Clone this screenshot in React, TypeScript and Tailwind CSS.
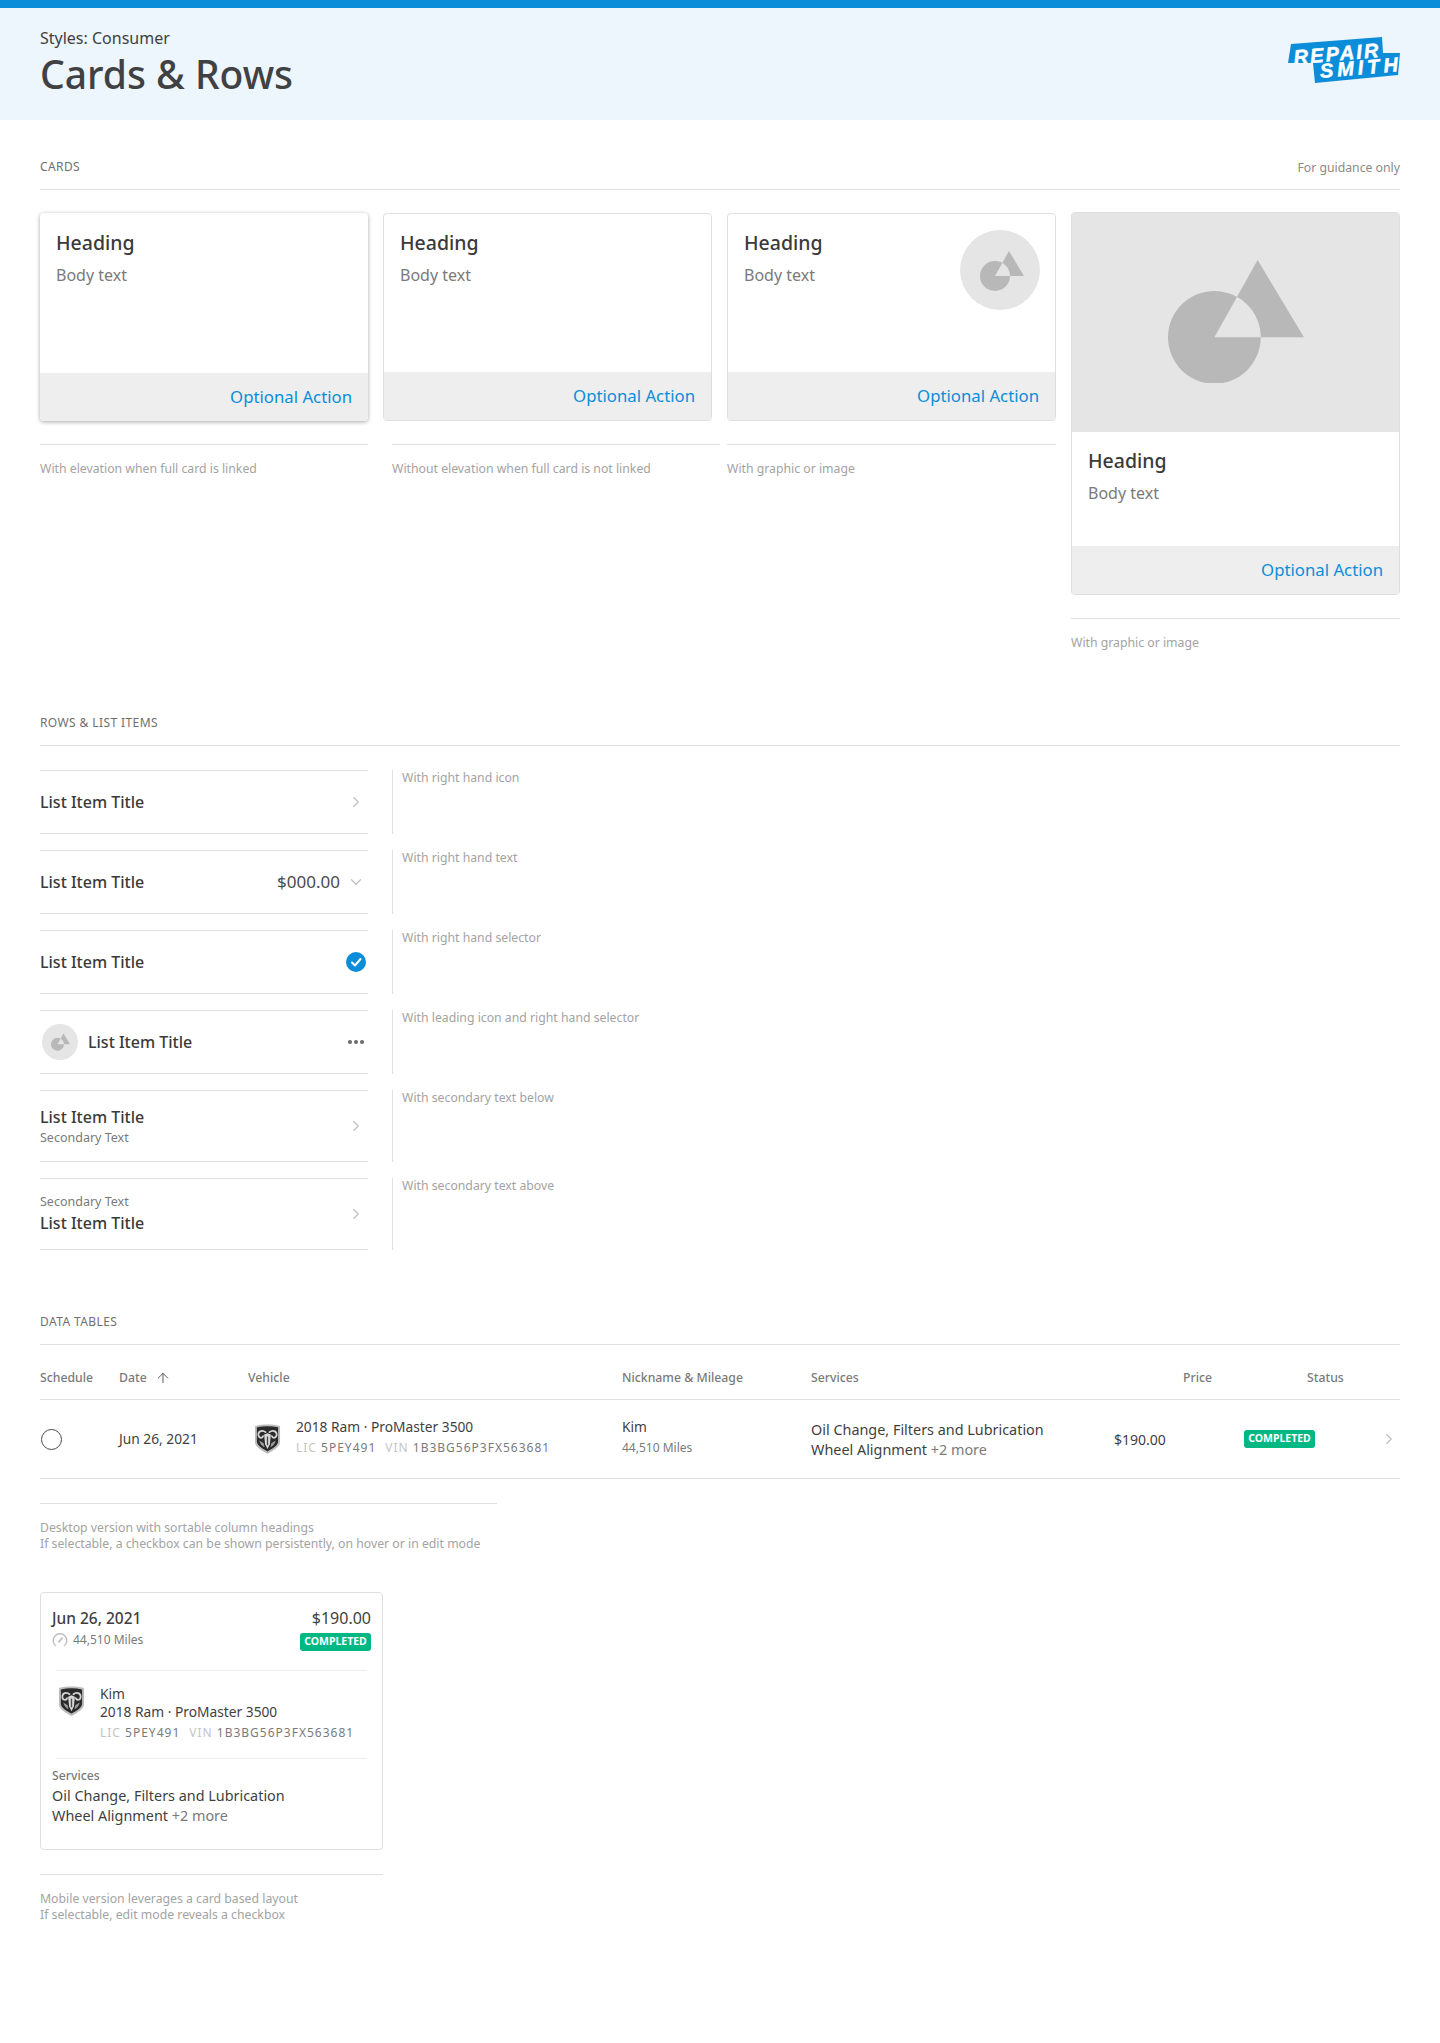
import { ArrowUp, ChevronDown, ChevronRight } from 'lucide-react';

const font = "font-['Noto_Sans',sans-serif]";

const Shapes = ({ className, bg }: { className: string; bg: string }) => (
    <svg viewBox="0 0 44 41" className={className}>
        <defs>
            <clipPath id={`clip-${bg}`}>
                <circle cx="15" cy="26" r="15" />
            </clipPath>
        </defs>
        <circle cx="15" cy="26" r="15" fill="#b8b8b8" />
        <polygon points="29,1 15,26 44,26" fill="#b8b8b8" />
        <polygon points="29,1 15,26 44,26" fill={bg} clipPath={`url(#clip-${bg})`} />
    </svg>
);

const RamLogo = ({ className }: { className: string }) => (
    <svg viewBox="0 0 28 31" className={className}>
        <path d="M1 2C9 0 19 0 27 2V19C27 24 19 28 14 31C9 28 1 24 1 19Z" fill="#bdbdbd" />
        <path d="M3 3.500C10 2 18 2 25 3.500V18C25 23 18 26 14 28.500C10 26 3 23 3 18Z" fill="#2a2a2a" />
        <g fill="none" stroke="#d4d4d4" strokeWidth="1.800" strokeLinecap="round">
            <path d="M12 8.500C9 6 4.500 7 4.500 11C4.500 14.500 8.500 15.500 9.500 12.500" />
            <path d="M16 8.500C19 6 23.500 7 23.500 11C23.500 14.500 19.500 15.500 18.500 12.500" />
        </g>
        <path d="M10.500 11L14 9.500L17.500 11L16.500 21L14 26L11.500 21Z" fill="#d8d8d8" />
        <path d="M5.500 17L10 20L11 24C8.500 23 6 20.500 5.500 17ZM22.500 17L18 20L17 24C19.500 23 22 20.500 22.500 17Z" fill="#9a9a9a" />
        <path d="M13.300 13H14.700V22H13.300Z" fill="#4a4a4a" />
    </svg>
);

const SectionHeading = ({ title, note }: { title: string; note?: string }) => (
    <div className="flex h-[35px] items-start justify-between border-b border-[#e0e0e0] pt-[4px]">
        <p className="text-[12px] leading-[16px] tracking-[0.4px] text-[#6f6f6f]">{title}</p>
        {note && <p className="text-[12.250px] leading-[18px] text-[#8a8a8a]">{note}</p>}
    </div>
);

const Caption = ({ children, className = '' }: { children: React.ReactNode; className?: string }) => (
    <div className={`mt-[23px] border-t border-[#e0e0e0] pt-[16px] text-[12.250px] leading-[16px] text-[#a3a3a3] ${className}`}>
        {children}
    </div>
);

const CardBody = () => (
    <>
        <h3 className="pt-px text-[19.500px] font-medium leading-[26px] text-[#3a3a3a]">Heading</h3>
        <p className="mt-[8px] text-[16px] leading-[22px] text-[#7a7a7a]">Body text</p>
    </>
);

const CardFooter = () => (
    <div className="flex h-[48px] items-center justify-end bg-[#eeeeee] px-4 text-[16.750px] text-[#0c8dd9]">
        Optional Action
    </div>
);

const Badge = () => (
    <span className="flex h-[18px] w-[71px] items-center justify-center rounded-[3px] bg-[#00b884] text-[10.500px] font-bold text-white">
        COMPLETED
    </span>
);

const Chevron = () => <ChevronRight size={18} strokeWidth={1.5} className="mr-px text-[#bdbdbd]" />;

const Title = () => <p className="text-[16px] font-medium leading-[22px] text-[#3a3a3a]">List Item Title</p>;
const Secondary = () => <p className="text-[12.500px] leading-[16px] text-[#7a7a7a]">Secondary Text</p>;

const rows = [
    {
        caption: 'With right hand icon',
        height: 'h-[64px]',
        content: (
            <>
                <Title />
                <Chevron />
            </>
        ),
    },
    {
        caption: 'With right hand text',
        height: 'h-[64px]',
        content: (
            <>
                <Title />
                <div className="flex items-center gap-[7px]">
                    <span className="text-[17px] text-[#4a4a4a]">$000.00</span>
                    <ChevronDown size={18} strokeWidth={1.5} className="mr-px text-[#bdbdbd]" />
                </div>
            </>
        ),
    },
    {
        caption: 'With right hand selector',
        height: 'h-[64px]',
        content: (
            <>
                <Title />
                <span className="flex size-[20px] items-center justify-center rounded-full bg-[#0c8dd9]">
                    <svg viewBox="0 0 20 20" className="size-[20px]">
                        <path d="M6 10.500L9 13.500L14.500 7" fill="none" stroke="#ffffff" strokeWidth="2" strokeLinecap="round" strokeLinejoin="round" />
                    </svg>
                </span>
            </>
        ),
    },
    {
        caption: 'With leading icon and right hand selector',
        height: 'h-[64px]',
        content: (
            <>
                <div className="flex items-center gap-[10px] pl-[2px]">
                    <span className="flex size-[36px] items-center justify-center rounded-full bg-[#e5e5e5]">
                        <Shapes className="w-[19px]" bg="#e5e5e5" />
                    </span>
                    <Title />
                </div>
                <span className="mr-[2px] flex gap-[2px]">
                    <i className="size-[4px] rounded-full bg-[#6a6a6a]" />
                    <i className="size-[4px] rounded-full bg-[#6a6a6a]" />
                    <i className="size-[4px] rounded-full bg-[#6a6a6a]" />
                </span>
            </>
        ),
    },
    {
        caption: 'With secondary text below',
        height: 'h-[72px]',
        content: (
            <>
                <div className="flex flex-col gap-[2px]">
                    <Title />
                    <Secondary />
                </div>
                <Chevron />
            </>
        ),
    },
    {
        caption: 'With secondary text above',
        height: 'h-[72px]',
        content: (
            <>
                <div className="flex flex-col gap-[2px]">
                    <Secondary />
                    <Title />
                </div>
                <Chevron />
            </>
        ),
    },
];

const Plate = () => (
    <p className="text-[12px] leading-[16px] tracking-[1px] text-[#7a7a7a]">
        <span className="text-[#c4c4c4]">LIC</span> 5PEY491
        <span className="ml-[9px] text-[#c4c4c4]">VIN</span> 1B3BG56P3FX563681
    </p>
);

const More = () => <span className="text-[#7a7a7a]">+2 more</span>;

const App = () => {
    return (
        <div className={`min-h-[2043px] bg-white ${font}`}>
            <header className="flex h-[120px] items-start justify-between border-t-[8px] border-[#0c8dd9] bg-[#edf5fd] pl-10 pr-10">
                <div>
                    <p className="mt-[19px] text-[16px] leading-[22px] text-[#3f3f3f]">Styles: Consumer</p>
                    <h1 className="text-[39px] font-medium leading-[50px] text-[#3f4142]">Cards &amp; Rows</h1>
                </div>
                <svg viewBox="0 0 112 47" className="mt-[28px] h-[47px] w-[112px]">
                    <polygon points="3,8 94,1 95,17 112,17 110,39 27,47 25,27 0,27" fill="#0c8dd9" />
                    <g transform="rotate(-5 56 23)" fill="#ffffff" stroke="#ffffff" strokeWidth="0.500" fontFamily="'Liberation Sans', sans-serif" fontWeight="700" fontStyle="italic">
                        <text x="6" y="24" fontSize="20" textLength={85}>REPAIR</text>
                        <text x="31" y="40" fontSize="20" textLength={78}>SMITH</text>
                    </g>
                </svg>
            </header>

            <main className="px-10">
                <section className="pt-[35px]">
                    <SectionHeading title="CARDS" note="For guidance only" />
                    <div className="mt-[22px] grid grid-cols-[328px_329px_329px_329px] items-start gap-x-[15px]">
                        <div>
                            <div className="mt-[1px] flex h-[208px] flex-col overflow-hidden rounded-[4px] bg-white shadow-[0_1px_4px_rgba(0,0,0,0.35)]">
                                <div className="flex-1 p-4"><CardBody /></div>
                                <CardFooter />
                            </div>
                            <Caption>With elevation when full card is linked</Caption>
                        </div>
                        <div>
                            <div className="mt-[1px] flex h-[208px] flex-col overflow-hidden rounded-[4px] border border-[#dedede] bg-white">
                                <div className="flex-1 pl-[16px] pt-[15px]"><CardBody /></div>
                                <CardFooter />
                            </div>
                            <Caption className="ml-[9px] mr-[-8px]">Without elevation when full card is not linked</Caption>
                        </div>
                        <div>
                            <div className="mt-[1px] flex h-[208px] flex-col overflow-hidden rounded-[4px] border border-[#dedede] bg-white">
                                <div className="flex flex-1 justify-between pl-[16px] pr-[15px] pt-[15px]">
                                    <div><CardBody /></div>
                                    <span className="mt-px flex size-[80px] items-center justify-center rounded-full bg-[#e5e5e5]">
                                        <Shapes className="ml-[4px] w-[44px]" bg="#e5e5e5" />
                                    </span>
                                </div>
                                <CardFooter />
                            </div>
                            <Caption>With graphic or image</Caption>
                        </div>
                        <div>
                            <div className="flex h-[383px] flex-col overflow-hidden rounded-[4px] border border-[#dedede] bg-white">
                                <div className="flex h-[219px] items-center justify-center bg-[#e5e5e5]">
                                    <Shapes className="mb-[5px] w-[136px]" bg="#e5e5e5" />
                                </div>
                                <div className="flex-1 pl-[16px] pt-[15px]"><CardBody /></div>
                                <CardFooter />
                            </div>
                            <Caption>With graphic or image</Caption>
                        </div>
                    </div>
                </section>

                <section className="pt-[60px]">
                    <SectionHeading title="ROWS & LIST ITEMS" />
                    <div className="mt-[24px] flex flex-col gap-[16px]">
                        {rows.map((row) => (
                            <div key={row.caption} className="flex">
                                <div className={`flex w-[328px] items-center justify-between border-y border-[#e0e0e0] pr-[2px] ${row.height}`}>
                                    {row.content}
                                </div>
                                <div className="ml-[24px] border-l border-[#e0e0e0] pl-[9px] text-[12.250px] leading-[16px] text-[#a3a3a3]">
                                    {row.caption}
                                </div>
                            </div>
                        ))}
                    </div>
                </section>

                <section className="pt-[60px]">
                    <SectionHeading title="DATA TABLES" />
                    <div className="flex h-[55px] items-center border-b border-[#e0e0e0] pt-[12px] text-[12.250px] font-medium text-[#7a7a7a]">
                        <span className="w-[79px]">Schedule</span>
                        <span className="flex w-[129px] items-center gap-[8px]">Date <ArrowUp size={16} strokeWidth={1.5} className="text-[#5a5a5a]" /></span>
                        <span className="w-[374px]">Vehicle</span>
                        <span className="w-[189px]">Nickname &amp; Mileage</span>
                        <span className="w-[372px]">Services</span>
                        <span className="w-[124px]">Price</span>
                        <span>Status</span>
                    </div>
                    <div className="flex h-[79px] items-center border-b border-[#e0e0e0] text-[13.750px] text-[#3f3f3f]">
                        <div className="w-[79px]">
                            <span className="ml-px block size-[21px] rounded-full border-[1.500px] border-[#4a4a4a]" />
                        </div>
                        <div className="w-[129px]">Jun 26, 2021</div>
                        <div className="flex w-[374px] items-center pl-[6px]">
                            <RamLogo className="w-[27px]" />
                            <div className="mb-[6px] ml-[15px]">
                                <p className="leading-[22px]">2018 Ram · ProMaster 3500</p>
                                <div className="mt-[2px]"><Plate /></div>
                            </div>
                        </div>
                        <div className="mb-[6px] w-[189px]">
                            <p className="leading-[22px]">Kim</p>
                            <p className="mt-[2px] text-[12px] leading-[16px] text-[#7a7a7a]">44,510 Miles</p>
                        </div>
                        <div className="mt-[1px] w-[303px] text-[14.400px] leading-[20px]">
                            <p>Oil Change, Filters and Lubrication</p>
                            <p>Wheel Alignment <More /></p>
                        </div>
                        <div className="w-[130px] text-[14px]">$190.00</div>
                        <div className="w-[136px]"><Badge /></div>
                        <Chevron />
                    </div>
                    <Caption className="mt-[24px] w-[457px]">
                        Desktop version with sortable column headings<br />
                        If selectable, a checkbox can be shown persistently, on hover or in edit mode
                    </Caption>
                </section>

                <section className="mt-[40px] w-[343px]">
                    <div className="h-[258px] rounded-[4px] border border-[#dedede] px-[11px] pt-[13px] text-[#3f3f3f]">
                        <div className="flex justify-between">
                            <div>
                                <p className="text-[15.500px] font-medium leading-[24px]">Jun 26, 2021</p>
                                <div className="mt-[1px] flex items-center gap-[5px] text-[12px] leading-[18px] text-[#7a7a7a]">
                                    <svg viewBox="0 0 16 16" className="size-[16px]" fill="none" stroke="#c0c0c0" strokeWidth="1.500">
                                        <path d="M4 14A6.800 6.800 0 1 1 12 14" />
                                        <path d="M6.500 10.500L10.500 5.500" strokeWidth="2" />
                                    </svg>
                                    44,510 Miles
                                </div>
                            </div>
                            <div className="flex flex-col items-end">
                                <p className="text-[16px] leading-[24px]">$190.00</p>
                                <div className="mt-[3px]"><Badge /></div>
                            </div>
                        </div>
                        <div className="mx-[4px] mt-[19px] flex gap-[15px] border-y border-[#eeeeee] pb-[17px] pt-[14px]">
                            <RamLogo className="ml-[2px] mt-[1px] h-[30px] w-[27px]" />
                            <div className="text-[13.750px]">
                                <p className="leading-[18px]">Kim</p>
                                <p className="leading-[18px]">2018 Ram · ProMaster 3500</p>
                                <div className="mt-[4px]"><Plate /></div>
                            </div>
                        </div>
                        <p className="mt-[9px] text-[12.250px] font-medium leading-[16px] text-[#7a7a7a]">Services</p>
                        <div className="mt-[2px] text-[14.400px] leading-[20px]">
                            <p>Oil Change, Filters and Lubrication</p>
                            <p>Wheel Alignment <More /></p>
                        </div>
                    </div>
                    <Caption className="mt-[24px]">
                        Mobile version leverages a card based layout<br />
                        If selectable, edit mode reveals a checkbox
                    </Caption>
                </section>
            </main>
        </div>
    );
};

export default App;
